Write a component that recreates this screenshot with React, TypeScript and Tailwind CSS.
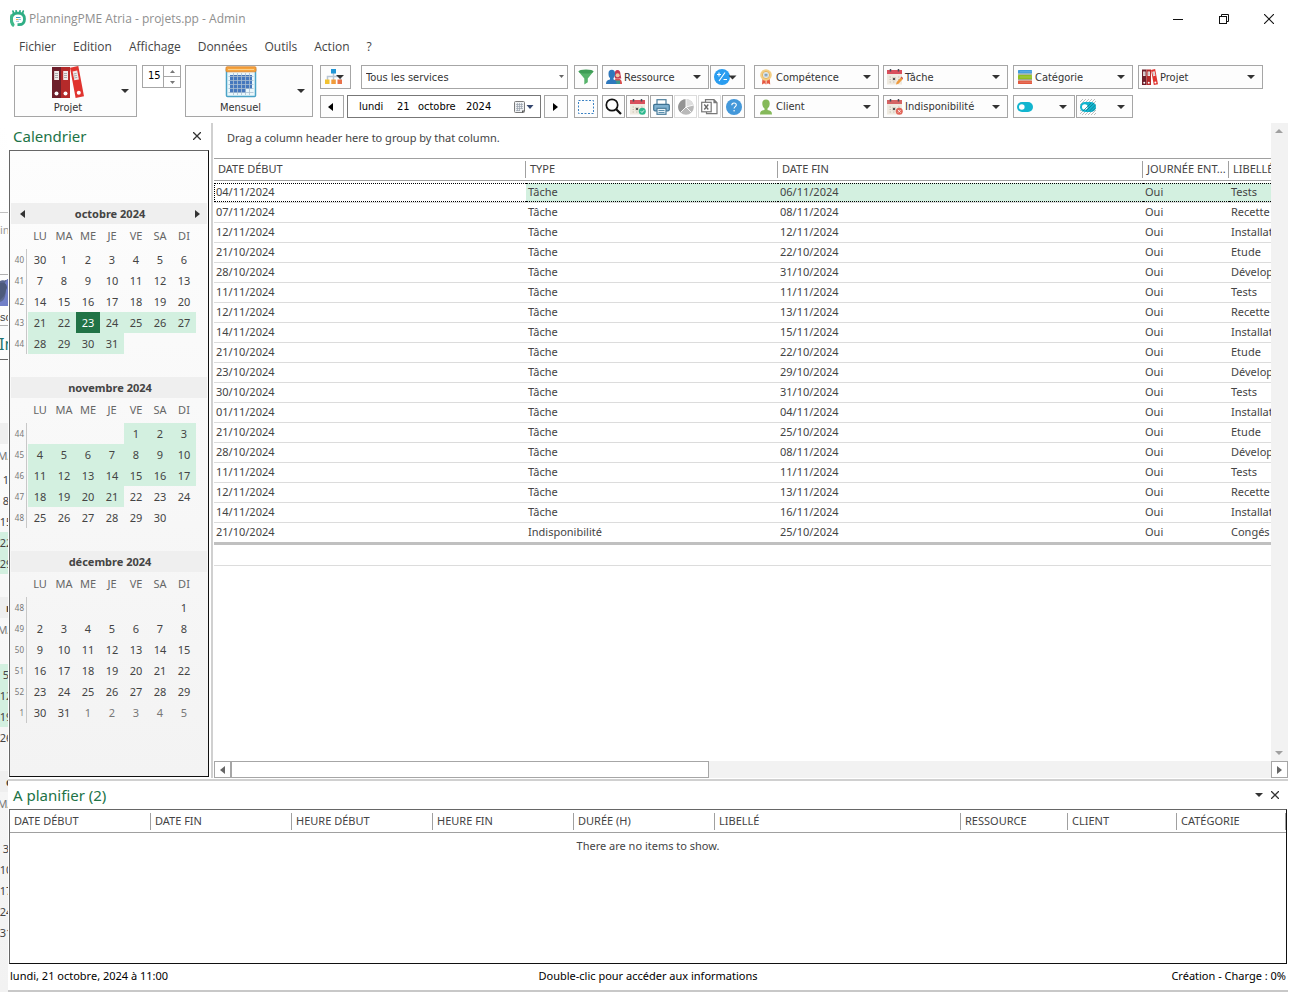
import React from "react";

const TOOL_BTN =
  "flex items-center border border-[#a6a6a6] bg-[#fdfdfd] text-[#333] shrink-0";

function Caret({ className = "text-[#333]" }: { className?: string }) {
  return (
    <svg width="8" height="4" viewBox="0 0 8 4" className={"shrink-0 " + className} aria-hidden="true">
      <path d="M0 0h8L4 4z" fill="currentColor" />
    </svg>
  );
}

function SideArrow({ dir, className = "text-black" }: { dir: "left" | "right"; className?: string }) {
  return (
    <svg width="5" height="8" viewBox="0 0 5 8" className={"shrink-0 " + className} aria-hidden="true">
      <path d={dir === "left" ? "M5 0v8L0 4z" : "M0 0v8l5-4z"} fill="currentColor" />
    </svg>
  );
}

function AppLogo() {
  return (
    <svg width="16" height="17" viewBox="0 0 16 17" aria-hidden="true">
      <path d="M3.500 15C1.800 13.800 1.500 12 1.500 9c0-4.200 2.300-5.900 6.500-5.900s6.500 1.700 6.500 5.900c0 4-2 5.700-5.500 5.700H7.500" fill="none" stroke="#2fae85" strokeWidth="2.800" />
      <path d="M2 4.500C.9 9 1.200 14 4 16" fill="none" stroke="#3fb98a" strokeWidth="2.800" />
      <path d="M3.800 3.500 3 1.200M6.400 2.600 6.100.9M9.700 2.600 10 .9M12.400 3.500 13.200 1.200" stroke="#2fae85" strokeWidth="1.800" strokeLinecap="round" />
      <rect x="4.500" y="5.500" width="7.500" height="7.500" rx="1.800" fill="#fff" />
      <path d="M6 7.500h4.500" stroke="#3a9bc4" />
      <path d="M6 9.500h2.500" stroke="#f0b440" />
      <path d="M8.500 9.500h2.500M6 11.300h3" stroke="#8cc6dc" />
    </svg>
  );
}

function Binders({ size }: { size: number }) {
  return (
    <svg width={size} height={size} viewBox="0 0 32 32" aria-hidden="true">
      <rect x="0" y="1" width="9" height="31" fill="#6d1f2b" />
      <rect x="9" y="1" width="9" height="31" fill="#b52a2a" />
      <path d="m18 1.800 8.300-1.800L32 30.300 23.600 32z" fill="#e0342f" />
      <path d="M2.200 5h4.800v9H2.200zM11.200 5H16v9h-4.800z" fill="#f1e9e9" />
      <path d="m20.600 5.600 4.600-1 1.700 8.800-4.600.9z" fill="#f1e9e9" />
      <path d="M3 7.500h3M3 9.500h3M3 11.500h3M12 7.500h3M12 9.500h3M12 11.500h3m6.500-3.500 3-.6m-2.600 2.600 3-.6m-2.600 2.600 3-.6" stroke="#9b9b9b" strokeWidth=".8" />
      <circle cx="4.500" cy="27.500" r="2" fill="#fff" />
      <circle cx="13.500" cy="27.500" r="2" fill="#fff" />
      <circle cx="26.800" cy="26.800" r="2" fill="#fff" />
    </svg>
  );
}

function MonthGridIcon() {
  return (
    <svg width="32" height="32" viewBox="0 0 32 32" aria-hidden="true">
      <rect x="1.500" y="2" width="29" height="28.500" rx="1" fill="#eaf7fb" stroke="#4aa3c7" strokeWidth="1.500" />
      <rect x="1" y=".8" width="30" height="5" rx="1" fill="#f6a33c" stroke="#d9822b" strokeWidth=".8" />
      <path d="M3 3.500h26" stroke="#fbd08c" />
      <rect x="5" y="9" width="22" height="18" fill="#4678bd" />
      <rect x="21" y="23" width="6" height="4.500" fill="#eaf7fb" />
      <path d="M8.500 7v22M12.500 7v22M16.500 7v22M20.500 7v22M24.500 7v22M3.500 10.500h25M3.500 14.500h25M3.500 18.500h25M3.500 22.500h25M3.500 26.500h25" stroke="#a9bfd2" strokeWidth=".8" />
    </svg>
  );
}

function OrgIcon() {
  return (
    <svg width="20" height="16" viewBox="0 0 20 16" aria-hidden="true">
      <path d="M2.500 11V7.500h13V11M8.500 4v7" fill="none" stroke="#b9c6d4" strokeWidth="1.500" />
      <rect x="6" y="0" width="5" height="4.500" fill="#2196d6" />
      <rect x="0" y="10.500" width="4.500" height="4.500" fill="#f2c230" />
      <rect x="6.300" y="10.500" width="4.500" height="4.500" fill="#ef9b3a" />
      <rect x="12.500" y="10.500" width="4.500" height="4.500" fill="#e9724a" />
      <path d="M11 6h8l-4 4z" fill="#333" />
    </svg>
  );
}

function FunnelIcon() {
  return (
    <svg width="16" height="16" viewBox="0 0 16 16" aria-hidden="true">
      <path d="M.5 2.500 6.300 9.500v6l3.500-2.300V9.500l5.700-7z" fill="#57b36b" />
      <ellipse cx="8" cy="2.500" rx="7.500" ry="2" fill="#3f9d56" />
    </svg>
  );
}

function PeopleIcon() {
  return (
    <svg width="16" height="16" viewBox="0 0 16 16" aria-hidden="true">
      <path d="M8.500 6c0-3.500 1-5 3-5s3 2 3 4.500l.8 4H9z" fill="#c63a52" />
      <path d="M8 15c0-4 1-5.500 3.500-5.500S16 11 16 15z" fill="#d8504f" />
      <circle cx="11.600" cy="6.300" r="2" fill="#f0c7a0" />
      <path d="M9 11.500h5v3.500H9z" fill="#3b9a8b" />
      <path d="M0 15c0-3 1.500-4 4-4.500V9C2.800 8 2.500 6.500 2.500 4.500 2.500 2 3.700.8 5.800.8S9 2 9 4.500C9 6.500 8.700 8 7.500 9v1.500c2 .5 3 1.500 3 4.500z" fill="#2e78bd" />
    </svg>
  );
}

function PlusMinusIcon() {
  return (
    <svg width="24" height="16" viewBox="0 0 24 16" aria-hidden="true">
      <circle cx="8" cy="8" r="8" fill="#2a9df0" />
      <path d="m5 12 6-8.500M3 5.500h4M5 3.500v4M9.500 10.500h3.500" stroke="#fff" strokeWidth="1.100" fill="none" />
      <path d="M14.500 6.500h8l-4 4z" fill="#333" />
    </svg>
  );
}

function MedalIcon() {
  return (
    <svg width="16" height="16" viewBox="0 0 16 16" aria-hidden="true">
      <path d="M4.500 9 4 15.500l2.200-1.200 1.500 1.200V9zM8.500 9v6.500l1.500-1.200 2.200 1.200L11.700 9z" fill="#e5583f" />
      <circle cx="8" cy="6" r="5.800" fill="#f3cf86" />
      <circle cx="8" cy="6" r="3.600" fill="#dfe8ee" stroke="#e8b55c" />
      <path d="M6.500 5.300h3M6.500 6.800h3" stroke="#6f8ea5" />
    </svg>
  );
}

function ClientIcon() {
  return (
    <svg width="16" height="16" viewBox="0 0 16 16" aria-hidden="true">
      <path d="M2 15.500c0-3 1.500-4 4.500-4.500V9.500C5 8.500 4.300 6.500 4.300 4.500 4.300 2 5.700.5 8 .5s3.700 1.500 3.700 4c0 2-.7 4-2.200 5V11c3 .5 4.500 1.500 4.500 4.500z" fill="#85b95a" />
    </svg>
  );
}

function CalendarIcon({ mark, dim }: { mark: "pencil" | "cross" | "check"; dim?: boolean }) {
  return (
    <svg width="16" height="16" viewBox="0 0 16 16" aria-hidden="true">
      <rect x="0" y="1" width="15" height="14.500" fill="#efeae0" />
      <rect x="0" y="1" width="15" height="4" fill={dim ? "#d56464" : "#d94f5c"} />
      <path d="M3.500 0v2.500M11.500 0v2.500" stroke="#444a55" strokeWidth="1.500" />
      <path d="M2.500 8h1.500M11 8h1.500M2.500 10.500h1.500M11 10.500h1.500M2.500 13h1.500M6 13h1.500" stroke="#c9c2b4" />
      <rect x="5" y="8" width="4" height="3.500" fill="#d8d2c4" />
      <rect x="6" y="9" width="2" height="2" fill="#555" />
      {mark === "pencil" && (
        <>
          <path d="m9 15.500.7-2.600L14 8.300l1.900 1.800-4.400 4.700z" fill="#f09a3c" />
          <path d="m13.600 8.600 1-1 1.400 1.300v1.300z" fill="#c9504a" />
        </>
      )}
      {mark === "cross" && (
        <>
          <circle cx="12.300" cy="12.300" r="3.500" fill="#e2665a" />
          <path d="m11 11 2.600 2.600M13.600 11 11 13.600" stroke="#fff" strokeWidth=".8" />
        </>
      )}
      {mark === "check" && (
        <>
          <circle cx="12.300" cy="12.300" r="3.500" fill="#2fb98f" />
          <path d="m10.800 12.300 1.200 1.200 2-2.200" stroke="#fff" strokeWidth=".9" fill="none" />
        </>
      )}
    </svg>
  );
}

function StackIcon() {
  return (
    <svg width="16" height="16" viewBox="0 0 16 16" aria-hidden="true">
      <rect x="1" y="1" width="14" height="3.600" rx=".5" fill="#3f9bdc" />
      <rect x="1" y="6" width="14" height="4" rx=".5" fill="#8fbf21" />
      <rect x="1" y="11.400" width="14" height="3.600" rx=".5" fill="#e2583e" />
      <path d="M3 2.800h12M3 8h12M3 13.200h12" stroke="#fff" strokeWidth=".4" opacity=".5" />
      <path d="M1 5.200h14M1 10.700h14" stroke="#5a6b3a" strokeWidth=".7" />
    </svg>
  );
}

function ToggleIcon({ hatched }: { hatched?: boolean }) {
  return (
    <svg width="16" height="16" viewBox="0 0 16 16" aria-hidden="true">
      {hatched && <path d="M0 3 3 0M0 6 6 0M0 9 9 0M0 12 12 0M0 15 15 0M2 16 16 2M5 16 16 5M8 16l8-8M11 16l5-5M14 16l2-2" stroke="#a0a0a0" strokeWidth=".7" />}
      <rect x="0" y="3" width="16" height="10" rx="5" fill="#12b5cf" />
      <circle cx="4.800" cy="8" r="2.800" fill="#fff" />
      {hatched && <path d="M3 12 11 4M6 12l8-8M9 12.500 15.500 6M12 12.500l3.500-3.500" stroke="#11798c" strokeWidth=".8" />}
    </svg>
  );
}

function MarqueeIcon() {
  return (
    <svg width="16" height="14" viewBox="0 0 16 14" aria-hidden="true">
      <rect x=".5" y=".5" width="15" height="13" fill="none" stroke="#3b82c4" strokeDasharray="2 1.500" />
    </svg>
  );
}

function MagnifierIcon() {
  return (
    <svg width="17" height="17" viewBox="0 0 17 17" aria-hidden="true">
      <circle cx="7" cy="7" r="5.700" fill="none" stroke="#111" strokeWidth="1.700" />
      <path d="m11 11 5 5" stroke="#111" strokeWidth="2.200" />
    </svg>
  );
}

function PrinterIcon() {
  return (
    <svg width="17" height="16" viewBox="0 0 17 16" aria-hidden="true">
      <rect x="4" y=".7" width="9" height="5" fill="#fff" stroke="#4b7d9c" strokeWidth="1.200" />
      <rect x=".7" y="5.300" width="15.600" height="6.500" rx="1.200" fill="#7fb1d0" stroke="#3f7292" strokeWidth="1.200" />
      <rect x="4" y="9.300" width="9" height="6" fill="#e9f3f8" stroke="#4b7d9c" strokeWidth="1.200" />
      <path d="M5.500 11.500h6M5.500 13.500h6" stroke="#5d91ae" />
    </svg>
  );
}

function PieIcon() {
  return (
    <svg width="16" height="16" viewBox="0 0 16 16" aria-hidden="true">
      <circle cx="8" cy="8" r="7.800" fill="#b9b9b9" />
      <path d="M8 8V.2A7.800 7.800 0 0 0 2.500 13.500z" fill="#949494" />
      <path d="M8 8V.2A7.800 7.800 0 0 1 15.500 6z" fill="#dedede" />
      <path d="M8 0v8l7.600-2M8 8l5.500 5.500M8 8l-5.500 5.500" stroke="#fff" strokeWidth=".9" fill="none" />
    </svg>
  );
}

function ExcelIcon() {
  return (
    <svg width="17" height="16" viewBox="0 0 17 16" aria-hidden="true">
      <path d="M4.500 3V.7H13l3 3v11H5.500V13M13 .7v3h3" fill="#fff" stroke="#787878" strokeWidth="1.200" />
      <rect x=".7" y="3.300" width="9.500" height="9.500" fill="#fff" stroke="#787878" strokeWidth="1.200" />
      <path d="m3.300 5.500 4 5M7.300 5.500l-4 5" stroke="#666" strokeWidth="1.300" />
    </svg>
  );
}

function HelpIcon() {
  return (
    <svg width="16" height="16" viewBox="0 0 16 16" aria-hidden="true">
      <circle cx="8" cy="8" r="8" fill="#4398da" />
      <path d="M5.800 6.200C5.800 4.600 6.800 4 8 4s2.300.7 2.300 2c0 1.600-2.200 1.700-2.200 3.600" fill="none" stroke="#fff" strokeWidth="1.100" />
      <circle cx="8.100" cy="11.800" r=".8" fill="#fff" />
    </svg>
  );
}

function DateDropIcon() {
  return (
    <svg width="20" height="12" viewBox="0 0 20 12" className="shrink-0" aria-hidden="true">
      <rect x=".5" y=".5" width="10" height="11" rx="1" fill="#eef0f2" stroke="#7a7a7a" />
      <path d="M2 3.500h7M2 5.500h7M2 7.500h7M2 9.500h4M3.500 2v8M5.500 2v8M7.500 2v6" stroke="#9aa2ad" strokeWidth=".7" />
      <path d="M8 12V9.500h3z" fill="#555" />
      <path d="M12.500 4h7L16 8z" fill="#34466e" />
    </svg>
  );
}

function DropButton({ icon, label, width }: { icon: React.ReactNode; label: string; width: string }) {
  return (
    <button type="button" aria-haspopup="menu" className={`${TOOL_BTN} h-full gap-[2px] pl-[3px] pr-[7px] ${width}`}>
      {icon}
      <span className="flex-1 text-left">{label}</span>
      <Caret />
    </button>
  );
}

function SquareButton({ icon, label, className = "" }: { icon: React.ReactNode; label: string; className?: string }) {
  return (
    <button type="button" aria-label={label} className={`${TOOL_BTN} h-full justify-center ${className}`}>
      {icon}
    </button>
  );
}

function ToggleButton({ hatched, label, width }: { hatched?: boolean; label: string; width: string }) {
  return (
    <button type="button" aria-label={label} className={`${TOOL_BTN} h-full justify-between pl-[3px] pr-[7px] ${width}`}>
      <ToggleIcon hatched={hatched} />
      <Caret />
    </button>
  );
}

function TwoRows({ top, bottom, className = "" }: { top: React.ReactNode; bottom?: React.ReactNode; className?: string }) {
  return (
    <div className={`flex shrink-0 flex-col gap-[6px] ${className}`}>
      <div className="flex h-[24px]">{top}</div>
      {bottom && <div className="flex h-[23px]">{bottom}</div>}
    </div>
  );
}

function Toolbar() {
  return (
    <div className="flex items-start pl-[14px] pt-[8px] font-['DejaVu_Sans_Condensed','DejaVu_Sans',sans-serif] text-[11px]">
      <button type="button" className={`${TOOL_BTN} h-[52px] w-[123px] pr-[7px]`}>
        <span className="flex flex-1 flex-col items-center gap-[2px]">
          <Binders size={32} />
          <span className="leading-[16px]">Projet</span>
        </span>
        <Caret />
      </button>
      <div className="ml-[5px] flex h-[23px] w-[39px] shrink-0 border border-[#a6a6a6]">
        <input aria-label="Intervalle" defaultValue="15" className="min-w-0 flex-1 pb-[2px] pl-[5px] text-[11px] text-black" />
        <div className="flex w-[17px] flex-col border-l border-[#a6a6a6]">
          <button type="button" aria-label="Augmenter" className="flex flex-1 items-center justify-center border-b border-[#a6a6a6]">
            <svg width="5" height="3" viewBox="0 0 5 3" aria-hidden="true"><path d="M0 3h5L2.500 0z" fill="#777" /></svg>
          </button>
          <button type="button" aria-label="Diminuer" className="flex flex-1 items-center justify-center">
            <svg width="5" height="3" viewBox="0 0 5 3" aria-hidden="true"><path d="M0 0h5L2.500 3z" fill="#777" /></svg>
          </button>
        </div>
      </div>
      <button type="button" className={`${TOOL_BTN} ml-[4px] h-[52px] w-[128px] pr-[7px]`}>
        <span className="flex flex-1 flex-col items-center gap-[2px] pr-[2px]">
          <MonthGridIcon />
          <span className="leading-[16px]">Mensuel</span>
        </span>
        <Caret />
      </button>
      <TwoRows
        className="ml-[7px]"
        top={
          <>
            <SquareButton icon={<OrgIcon />} label="Organisation" className="w-[31px] pr-[2px]" />
            <div className="relative ml-[10px] w-[207px]">
              <select aria-label="Service" className="h-full w-full appearance-none border border-[#a6a6a6] bg-white pl-[4px] text-[11px] text-[#333]">
                <option>Tous les services</option>
              </select>
              <svg width="5" height="3" viewBox="0 0 5 3" className="pointer-events-none absolute right-[4px] top-[10px]" aria-hidden="true">
                <path d="M0 0h5L2.500 3z" fill="#666" />
              </svg>
            </div>
          </>
        }
        bottom={
          <>
            <SquareButton icon={<SideArrow dir="left" />} label="Période précédente" className="w-[24px] pr-[3px]" />
            <button type="button" aria-haspopup="dialog" className="ml-[3px] flex h-full w-[194px] items-center border border-[#777] bg-white pl-[11px] pr-[6px] text-black">
              <span className="w-[38px] text-left">lundi</span>
              <span className="w-[21px] text-left">21</span>
              <span className="w-[48px] text-left">octobre</span>
              <span className="flex-1 text-left">2024</span>
              <DateDropIcon />
            </button>
            <SquareButton icon={<SideArrow dir="right" />} label="Période suivante" className="ml-[3px] w-[24px] pr-[2px]" />
          </>
        }
      />
      <TwoRows
        className="ml-[6px]"
        top={<SquareButton icon={<FunnelIcon />} label="Filtrer" className="w-[24px]" />}
        bottom={<SquareButton icon={<MarqueeIcon />} label="Sélection" className="w-[24px]" />}
      />
      <TwoRows
        className="ml-[4px]"
        top={
          <>
            <DropButton icon={<PeopleIcon />} label="Ressource" width="w-[107px]" />
            <SquareButton icon={<PlusMinusIcon />} label="Ajouter ou retirer" className="ml-[1px] w-[35px] pr-[3px]" />
          </>
        }
        bottom={
          <div className="flex gap-[1px]">
            <SquareButton icon={<MagnifierIcon />} label="Rechercher" className="w-[23px]" />
            <SquareButton icon={<CalendarIcon mark="check" />} label="Disponibilités" className="w-[23px]" />
            <SquareButton icon={<PrinterIcon />} label="Imprimer" className="w-[23px]" />
            <button type="button" disabled aria-label="Statistiques" className="flex w-[23px] items-center justify-center border border-[#dcdcdc]">
              <PieIcon />
            </button>
            <button type="button" disabled aria-label="Exporter" className="flex w-[23px] items-center justify-center border border-[#dcdcdc]">
              <ExcelIcon />
            </button>
            <SquareButton icon={<HelpIcon />} label="Aide" className="w-[23px]" />
          </div>
        }
      />
      <TwoRows
        className="ml-[9px]"
        top={<DropButton icon={<MedalIcon />} label="Compétence" width="w-[125px]" />}
        bottom={<DropButton icon={<ClientIcon />} label="Client" width="w-[125px]" />}
      />
      <TwoRows
        className="ml-[4px]"
        top={<DropButton icon={<CalendarIcon mark="pencil" />} label="Tâche" width="w-[125px]" />}
        bottom={<DropButton icon={<CalendarIcon mark="cross" dim />} label="Indisponibilité" width="w-[125px]" />}
      />
      <TwoRows
        className="ml-[5px]"
        top={<DropButton icon={<StackIcon />} label="Catégorie" width="w-[120px]" />}
        bottom={
          <div className="flex gap-[1px]">
            <ToggleButton label="Affichage actif" width="w-[62px]" />
            <ToggleButton hatched label="Affichage hachuré" width="w-[57px]" />
          </div>
        }
      />
      <TwoRows
        className="ml-[5px]"
        top={<DropButton icon={<Binders size={16} />} label="Projet" width="w-[125px]" />}
      />
    </div>
  );
}

const MENU = ["Fichier", "Edition", "Affichage", "Données", "Outils", "Action", "?"];

function TitleBar() {
  return (
    <header className="flex h-[37px] items-center pl-[10px] text-[#8f8f8f]">
      <AppLogo />
      <h1 className="ml-[3px] flex-1 font-['Open_Sans',sans-serif] text-[12px]">PlanningPME Atria - projets.pp - Admin</h1>
      <div className="flex text-[#111]">
        <button type="button" aria-label="Réduire" className="flex w-[46px] items-center justify-center">
          <svg width="10" height="10" viewBox="0 0 10 10"><path d="M0 5.500h10" stroke="currentColor" /></svg>
        </button>
        <button type="button" aria-label="Restaurer" className="flex w-[45px] items-center justify-center">
          <svg width="10" height="10" viewBox="0 0 10 10" fill="none" stroke="currentColor">
            <rect x=".5" y="2.500" width="7" height="7" />
            <path d="M2.500 2.500v-2h7v7h-2" />
          </svg>
        </button>
        <button type="button" aria-label="Fermer" className="mr-[4px] flex w-[46px] items-center justify-center">
          <svg width="10" height="10" viewBox="0 0 10 10"><path d="m0 0 10 10M10 0 0 10" stroke="currentColor" strokeWidth="1.100" /></svg>
        </button>
      </div>
    </header>
  );
}

const DAYS = ["LU", "MA", "ME", "JE", "VE", "SA", "DI"];

type Month = { name: string; offset: number; days: number; prev: number; trailing: number; weeks: number[] };

const MONTHS: Month[] = [
  { name: "octobre 2024", offset: 1, days: 31, prev: 30, trailing: 0, weeks: [40, 41, 42, 43, 44] },
  { name: "novembre 2024", offset: 4, days: 30, prev: 0, trailing: 0, weeks: [44, 45, 46, 47, 48] },
  { name: "décembre 2024", offset: 6, days: 31, prev: 0, trailing: 5, weeks: [48, 49, 50, 51, 52, 1] },
];

function dayClass(month: number, day: number) {
  if (month === 0 && day === 23) return "bg-[#217346] text-white";
  if ((month === 0 && day >= 21 && day <= 31) || (month === 1 && day >= 1 && day <= 21)) return "bg-[#d3f0e0]";
  return "";
}

function MonthView({ month, index }: { month: Month; index: number }) {
  return (
    <section className="h-[174px]">
      <div className="mx-[1px] flex h-[21px] items-center justify-between bg-[#efefef] pl-[9px] pr-[7px] font-bold">
        {index === 0 ? (
          <button type="button" aria-label="Mois précédent"><SideArrow dir="left" className="text-[#333]" /></button>
        ) : (
          <span />
        )}
        <h3>{month.name}</h3>
        {index === 0 ? (
          <button type="button" aria-label="Mois suivant"><SideArrow dir="right" className="text-[#333]" /></button>
        ) : (
          <span />
        )}
      </div>
      <table className="ml-[1px] w-[185px] table-fixed border-separate border-spacing-0 text-center">
        <thead>
          <tr className="h-[25px] text-[#666]">
            <th className="w-[17px] p-0" />
            {DAYS.map((d) => (
              <th key={d} className="w-[24px] p-0 pb-[2px] font-normal">{d}</th>
            ))}
          </tr>
        </thead>
        <tbody>
          {month.weeks.map((week, row) => (
            <tr key={week} className="h-[21px]">
              <th className="p-0 font-normal">
                <span className="mr-[1px] flex h-[21px] items-center justify-end border-r border-[#c8c8c8] pr-[2px] text-[8px] text-[#777]">{week}</span>
              </th>
              {DAYS.map((d, col) => {
                const day = row * 7 + col - month.offset + 1;
                if (day < 1)
                  return <td key={d} className="p-0">{month.prev && col === month.offset - 1 ? month.prev : ""}</td>;
                if (day > month.days)
                  return (
                    <td key={d} className="p-0 text-[#777]">
                      {day - month.days <= month.trailing ? day - month.days : ""}
                    </td>
                  );
                return <td key={d} className={`p-0 ${dayClass(index, day)}`}>{day}</td>;
              })}
            </tr>
          ))}
        </tbody>
      </table>
    </section>
  );
}

function CalendarPane() {
  return (
    <aside className="flex w-[203px] shrink-0 flex-col pl-[1px]">
      <div className="flex h-[27px] items-center justify-between pl-[4px] pr-[10px]">
        <h2 className="text-[15px] text-[#217346]">Calendrier</h2>
        <button type="button" aria-label="Fermer le calendrier" className="pb-[2px]">
          <svg width="8" height="8" viewBox="0 0 8 8"><path d="m0 0 8 8M8 0 0 8" stroke="#333" strokeWidth="1.300" /></svg>
        </button>
      </div>
      <div className="mb-[1px] mr-[2px] flex-1 border border-b-[#111] border-l-[#666] border-r-[#111] border-t-[#666] bg-linear-to-b from-[#fdfdfd] to-[#f3f3f3] pt-[52px] text-[#444]">
        {MONTHS.map((m, i) => (
          <MonthView key={m.name} month={m} index={i} />
        ))}
      </div>
    </aside>
  );
}

const ROWS: [string, string, string, string][] = [
  ["04/11/2024", "Tâche", "06/11/2024", "Tests"],
  ["07/11/2024", "Tâche", "08/11/2024", "Recette"],
  ["12/11/2024", "Tâche", "12/11/2024", "Installation"],
  ["21/10/2024", "Tâche", "22/10/2024", "Etude"],
  ["28/10/2024", "Tâche", "31/10/2024", "Développement"],
  ["11/11/2024", "Tâche", "11/11/2024", "Tests"],
  ["12/11/2024", "Tâche", "13/11/2024", "Recette"],
  ["14/11/2024", "Tâche", "15/11/2024", "Installation"],
  ["21/10/2024", "Tâche", "22/10/2024", "Etude"],
  ["23/10/2024", "Tâche", "29/10/2024", "Développement"],
  ["30/10/2024", "Tâche", "31/10/2024", "Tests"],
  ["01/11/2024", "Tâche", "04/11/2024", "Installation"],
  ["21/10/2024", "Tâche", "25/10/2024", "Etude"],
  ["28/10/2024", "Tâche", "08/11/2024", "Développement"],
  ["11/11/2024", "Tâche", "11/11/2024", "Tests"],
  ["12/11/2024", "Tâche", "13/11/2024", "Recette"],
  ["14/11/2024", "Tâche", "16/11/2024", "Installation"],
  ["21/10/2024", "Indisponibilité", "25/10/2024", "Congés"],
];

const COLUMNS = [
  { label: "DATE DÉBUT", width: "w-[312px]" },
  { label: "TYPE", width: "w-[252px]" },
  { label: "DATE FIN", width: "w-[365px]" },
  { label: "JOURNÉE ENT...", width: "w-[86px]" },
  { label: "LIBELLÉ", width: "" },
];

function cellClass(row: number, col: number) {
  if (row > 0) return "flex h-[19px] items-center pb-[2px] pl-[2px]";
  if (col === 0) return "flex h-[19px] items-center border-y border-l border-dotted border-black pb-[2px] pl-[1px]";
  return "flex h-[19px] items-center border-y border-dotted border-black bg-[#d3f0e0] pb-[2px] pl-[2px]";
}

function TaskGrid() {
  return (
    <section className="flex min-w-0 flex-1 flex-col">
      <div className="flex flex-1">
        <div className="min-w-0 flex-1 overflow-hidden">
          <p className="flex h-[35px] items-center pb-[6px] pl-[13px]">Drag a column header here to group by that column.</p>
          <table className="w-full table-fixed border-separate border-spacing-0 whitespace-nowrap text-left">
            <thead>
              <tr>
                {COLUMNS.map((c, i) => (
                  <th key={c.label} className={`p-0 pb-[2px] font-normal ${c.width}`}>
                    <div className="flex h-[23px] items-center border-y border-[#a0a0a0]">
                      <span className={`flex h-[17px] flex-1 items-center pb-[2px] pl-[4px] ${i < 4 ? "border-r border-[#a0a0a0]" : ""}`}>{c.label}</span>
                    </div>
                  </th>
                ))}
              </tr>
            </thead>
            <tbody>
              {ROWS.map(([start, type, end, label], r) => (
                <tr key={r}>
                  {[start, type, end, "Oui", label].map((value, c) => (
                    <td key={c} className={`p-0 ${r === ROWS.length - 1 ? "border-b-[3px] border-[#c0c0c0]" : "border-b border-[#dcdcdc]"}`}>
                      <div className={cellClass(r, c)}>{value}</div>
                    </td>
                  ))}
                </tr>
              ))}
            </tbody>
          </table>
          <div className="h-[21px] border-b border-[#dcdcdc]" />
        </div>
        <div className="flex w-[17px] shrink-0 flex-col items-center justify-between bg-[#f2f2f2] py-[6px] pr-[1px]">
          <button type="button" aria-label="Défiler vers le haut" className="rotate-180"><Caret className="text-[#a0a0a0]" /></button>
          <button type="button" aria-label="Défiler vers le bas"><Caret className="text-[#a0a0a0]" /></button>
        </div>
      </div>
      <div className="flex h-[17px] bg-[#f2f2f2]">
        <button type="button" aria-label="Défiler à gauche" className="flex w-[17px] items-center justify-center border border-[#a6a6a6] bg-white">
          <SideArrow dir="left" className="text-[#666]" />
        </button>
        <div className="flex flex-1">
          <div className="w-[46%] border border-[#a6a6a6] bg-white" />
        </div>
        <button type="button" aria-label="Défiler à droite" className="flex w-[17px] items-center justify-center border border-[#a6a6a6] bg-white">
          <SideArrow dir="right" className="text-[#666]" />
        </button>
      </div>
    </section>
  );
}

const PLAN_COLUMNS = [
  { label: "DATE DÉBUT", width: "w-[141px]" },
  { label: "DATE FIN", width: "w-[141px]" },
  { label: "HEURE DÉBUT", width: "w-[141px]" },
  { label: "HEURE FIN", width: "w-[141px]" },
  { label: "DURÉE (H)", width: "w-[141px]" },
  { label: "LIBELLÉ", width: "w-[246px]" },
  { label: "RESSOURCE", width: "w-[107px]" },
  { label: "CLIENT", width: "w-[109px]" },
  { label: "CATÉGORIE", width: "" },
];

function PlanPane() {
  return (
    <section className="border-t-2 border-[#d0d0d0] pl-[1px]">
      <div className="flex h-[28px] items-center justify-between pl-[4px] pr-[9px]">
        <h2 className="text-[15px] text-[#217346]">A planifier (2)</h2>
        <div className="flex items-center gap-[8px]">
          <button type="button" aria-label="Options du volet"><Caret /></button>
          <button type="button" aria-label="Fermer le volet">
            <svg width="8" height="8" viewBox="0 0 8 8"><path d="m0 0 8 8M8 0 0 8" stroke="#333" strokeWidth="1.300" /></svg>
          </button>
        </div>
      </div>
      <div className="mr-[1px] h-[155px] border border-b-[#111] border-l-[#666] border-r-[#111] border-t-[#666]">
        <table className="w-full table-fixed border-separate border-spacing-0 whitespace-nowrap text-left">
          <thead>
            <tr>
              {PLAN_COLUMNS.map((c) => (
                <th key={c.label} className={`border-b border-[#a0a0a0] p-0 font-normal ${c.width}`}>
                  <div className="flex h-[22px] items-center">
                    <span className="flex h-[17px] flex-1 items-center border-r border-[#a0a0a0] pb-[2px] pl-[4px]">{c.label}</span>
                  </div>
                </th>
              ))}
            </tr>
          </thead>
          <tbody>
            <tr>
              <td colSpan={9} className="h-[26px] p-0 pb-[2px] text-center">There are no items to show.</td>
            </tr>
          </tbody>
        </table>
      </div>
    </section>
  );
}

const BACK_MONTHS = [
  { title: "", days: ["1", "8", "15", "22", "29"], marked: ["22", "29"] },
  { title: "n", days: ["", "5", "12", "19", "26"], marked: ["5", "12", "19"] },
  { title: "d", days: ["", "3", "10", "17", "24", "31"], marked: [] as string[] },
];

function BackWindowEdge() {
  return (
    <div aria-hidden="true" className="w-[8px] shrink-0 overflow-hidden bg-linear-to-b from-white to-[#f2f2f2] text-[#444]">
      <div className="-ml-[6px] w-[24px]">
        <div className="h-[90px] border-b border-[#c0c0c0]" />
        <div className="flex h-[62px] border-b border-[#b0b0b0] pl-[6px] pt-[9px] text-[#999]">in</div>
        <svg width="24" height="31" viewBox="0 0 24 31">
          <path d="M6 6c3-2 4 1 8-2v27H6z" fill="#5b6790" />
          <path d="M11 8c1-2 2-4 3-4v27H6v-4c5-1 7-8 5-19z" fill="#7280c8" />
          <path d="M6 8c4-1 7 0 7 5-2 3-1 6-4 9l-3 3z" fill="#4d5a7c" />
        </svg>
        <div className="flex h-[20px] items-center border-b border-[#b0b0b0] pl-[6px] pt-[4px] font-['Liberation_Sans',sans-serif]">so</div>
        <div className="flex h-[34px] items-center border-b border-[#666] pl-[5px] pt-[4px] text-[16px] text-[#217370]">In</div>
        <div className="h-[63px]" />
        {BACK_MONTHS.map((m, i) => (
          <div key={i} className="h-[174px] text-center">
            <div className="h-[21px] bg-[#efefef] pl-[12px] text-left font-bold leading-[21px]">{m.title}</div>
            <div className="h-[25px] leading-[23px] text-[#777]">MA</div>
            {m.days.map((d, j) => (
              <div key={j} className={`h-[21px] leading-[21px] ${m.marked.includes(d) ? "bg-[#d3f0e0]" : ""}`}>{d}</div>
            ))}
          </div>
        ))}
      </div>
    </div>
  );
}

export default function App() {
  return (
    <div className="flex min-h-screen flex-col overflow-hidden bg-white font-['Noto_Sans','Open_Sans',sans-serif] text-[11px] leading-[15px] text-[#444]">
      <TitleBar />
      <nav className="flex h-[20px] items-center gap-[17px] pb-[2px] pl-[19px] font-['Open_Sans',sans-serif] text-[12px]">
        {MENU.map((m) => (
          <button key={m} type="button">{m}</button>
        ))}
      </nav>
      <Toolbar />
      <div className="mt-[5px] flex flex-1">
        <BackWindowEdge />
        <div className="mr-[8px] flex min-w-0 flex-1 flex-col border-b-2 border-[#c8c8c8]">
          <main className="mb-px flex flex-1">
            <CalendarPane />
            <div className="mr-[1px] w-[2px] shrink-0 bg-[#d0d0d0]" />
            <TaskGrid />
          </main>
          <PlanPane />
          <footer className="flex h-[26px] items-center justify-between px-[2px] pb-[3px] text-black">
            <span className="flex-1">lundi, 21 octobre, 2024 à 11:00</span>
            <span>Double-clic pour accéder aux informations</span>
            <span className="flex-1 text-right">Création - Charge : 0%</span>
          </footer>
        </div>
      </div>
    </div>
  );
}
